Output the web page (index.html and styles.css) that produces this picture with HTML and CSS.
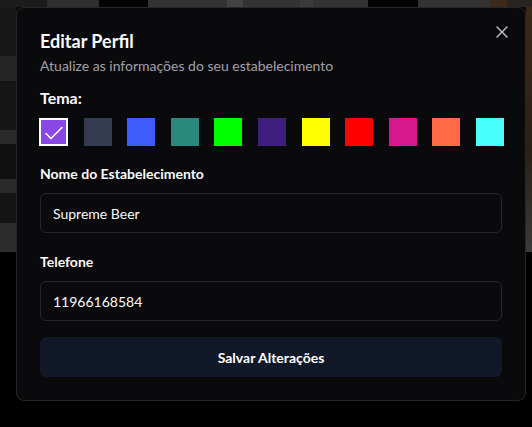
FILE: index.html
```html
<!DOCTYPE html>
<html lang="pt-BR">
<head>
<meta charset="utf-8">
<title>Editar Perfil</title>
<link rel="stylesheet" href="styles.css">
</head>
<body>
<div class="bg">
  <div class="bg-top">
    <span class="seg s1"></span><span class="seg s2"></span><span class="seg s3"></span><span class="seg s4"></span><span class="seg s5"></span><span class="seg s6"></span><span class="seg s7"></span><span class="seg s8"></span><span class="seg s9"></span><span class="seg s10"></span><span class="seg s11"></span><span class="seg s12"></span>
  </div>
  <div class="bg-mid">
    <div class="bg-left"></div>
    <div class="bg-center"></div>
    <div class="bg-right"></div>
  </div>
</div>

<div class="modal" role="dialog">
  <button class="close" aria-label="Fechar">
    <svg width="12" height="12" viewBox="0 0 12 12" fill="none" stroke="currentColor" stroke-width="1.4" stroke-linecap="round"><path d="M1 1l10 10M11 1L1 11"/></svg>
  </button>
  <h2 class="title">Editar Perfil</h2>
  <p class="subtitle">Atualize as informações do seu estabelecimento</p>

  <div class="label theme-label">Tema:</div>
  <div class="swatches">
    <span class="swatch selected" style="background:#8b47e6">
      <svg width="24" height="24" viewBox="0 0 24 24" fill="none" stroke="#fff" stroke-width="1.6" stroke-linecap="round" stroke-linejoin="round"><path d="M4 13.5l5 5 11-11"/></svg>
    </span>
    <span class="swatch" style="background:#343a50"></span>
    <span class="swatch" style="background:#3d5cfa"></span>
    <span class="swatch" style="background:#2a897d"></span>
    <span class="swatch" style="background:#00ff00"></span>
    <span class="swatch" style="background:#3e1f7e"></span>
    <span class="swatch" style="background:#ffff00"></span>
    <span class="swatch" style="background:#ff0000"></span>
    <span class="swatch" style="background:#d6178d"></span>
    <span class="swatch" style="background:#ff6b45"></span>
    <span class="swatch" style="background:#48fffd"></span>
  </div>

  <label class="label field-label">Nome do Estabelecimento</label>
  <div class="input">Supreme Beer</div>

  <label class="label field-label second">Telefone</label>
  <div class="input">11966168584</div>

  <button class="save">Salvar Alterações</button>
</div>
</body>
</html>
```
FILE: styles.css
```css
* { box-sizing: border-box; }
html, body { margin: 0; padding: 0; }
body {
  width: 532px;
  height: 427px;
  overflow: hidden;
  background: #000;
  font-family: Lato, "Open Sans", sans-serif;
  color: #fafafa;
  position: relative;
}

/* dimmed page behind the dialog */
.bg { display: flex; flex-direction: column; }
.bg-top { display: flex; height: 7px; }
.seg { display: block; height: 100%; }
.s1 { width: 47px; background: #1b1b1b; }
.s2 { width: 52px; background: #2e2e2e; }
.s3 { width: 49px; background: #020202; }
.s4 { width: 79px; background: #323232; }
.s5 { width: 16px; background: #424242; }
.s6 { width: 57px; background: #333; }
.s7 { width: 13px; background: #3a3a3a; }
.s8 { width: 55px; background: #333; }
.s9 { width: 50px; background: #030303; }
.s10 { width: 72px; background: #323232; }
.s11 { width: 17px; background: #3b2a1b; }
.s12 { flex: 1; background: #2a2420; }
.bg-mid { display: flex; height: 245px; }
.bg-left {
  width: 16px;
  background: linear-gradient(#181818 0 20%, #262626 20% 30%, #151515 30% 50%, #2a2a2a 50% 56%, #101010 56% 70%, #2a2a2a 70% 76%, #141414 76% 88%, #2c2c2c 88% 100%);
}
.bg-center { flex: 1; background: #0a0a0a; }
.bg-right { width: 6px; background: linear-gradient(#3a2818, #2a2018 60%, #3b3b3b); }

/* dialog */
.modal {
  position: absolute;
  left: 16px;
  top: 7px;
  width: 510px;
  height: 394px;
  background: #0a0a0c;
  border: 1px solid #27272a;
  border-radius: 8px;
  padding: 19px 23px 23px;
  display: flex;
  flex-direction: column;
}
.close {
  position: absolute;
  top: 18px;
  right: 17px;
  width: 12px;
  height: 12px;
  padding: 0;
  border: 0;
  background: none;
  color: #c8c8cc;
  display: flex;
}
.title {
  margin: 0;
  font-size: 18px;
  line-height: 28px;
  font-weight: 700;
}
.subtitle {
  margin: 1px 0 0;
  font-size: 14px;
  line-height: 20px;
  color: #a1a1aa;
}
.label {
  display: block;
  font-size: 14px;
  line-height: 20px;
  font-weight: 700;
  color: #fafafa;
}
.theme-label {
  margin-top: 12px;
  font-size: 16px;
}
.swatches {
  margin-top: 10px;
  margin-left: -1px;
  margin-right: -2px;
  display: flex;
  justify-content: space-between;
}
.swatch {
  width: 28px;
  height: 28px;
  display: flex;
  align-items: center;
  justify-content: center;
}
.swatch.selected {
  width: 29px;
  border: 2px solid #fff;
}
.field-label { margin-top: 18px; }
.field-label.second { margin-top: 19px; }
.input {
  margin-top: 9px;
  height: 40px;
  border: 1px solid #27272a;
  border-radius: 6px;
  padding: 0 12px;
  display: flex;
  align-items: center;
  font-size: 14px;
  color: #fafafa;
}
.save {
  margin-top: 16px;
  height: 40px;
  border: 0;
  border-radius: 6px;
  background: #111827;
  color: #fff;
  font-family: inherit;
  font-size: 14px;
  font-weight: 700;
}
```
